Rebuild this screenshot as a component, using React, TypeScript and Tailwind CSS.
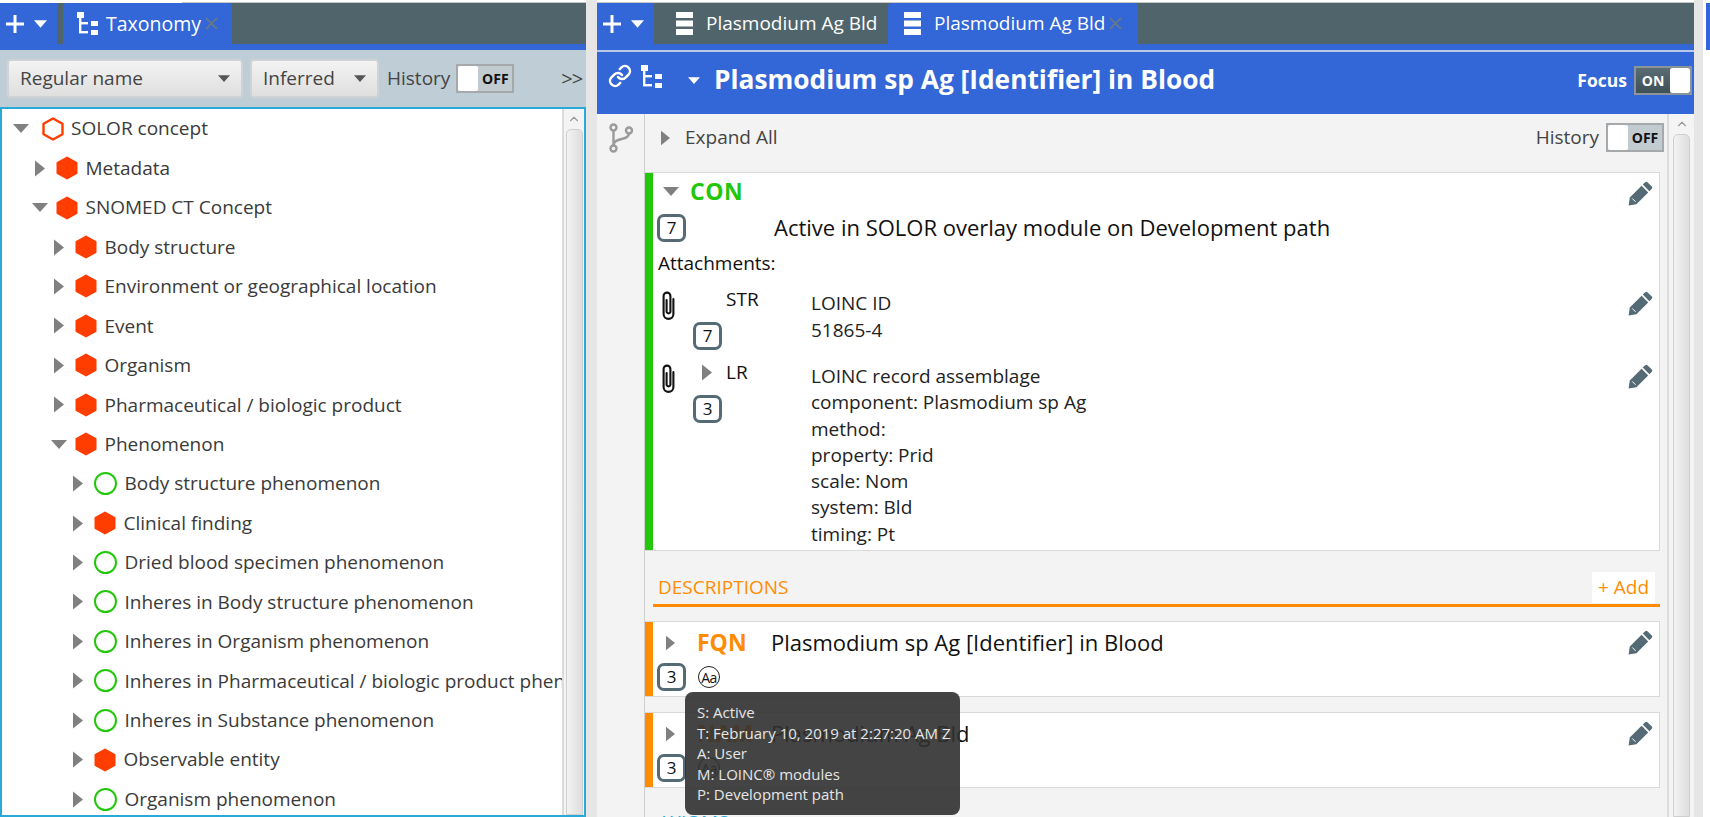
import React from "react";
import { Link as LinkIcon, ChevronUp } from "lucide-react";

const F = { fontFamily: '"Open Sans", "Noto Sans", sans-serif' };

function Down({ cls = "w-[16px] h-[9px]", color = "#808080" }: { cls?: string; color?: string }) {
  return (
    <svg viewBox="0 0 16 9" className={cls}>
      <polygon points="0,0 16,0 8,9" fill={color} />
    </svg>
  );
}
function Right({ cls = "w-[10px] h-[17px]" }: { cls?: string }) {
  return (
    <svg viewBox="0 0 10 16" className={cls}>
      <polygon points="0,0 10,8 0,16" fill="#808080" />
    </svg>
  );
}
function Hex({ hollow }: { hollow?: boolean }) {
  return (
    <svg viewBox="0 0 22 24" className="w-[22px] h-[24px] shrink-0">
      <polygon
        points="11,1.5 20.5,6.8 20.5,17.2 11,22.5 1.5,17.2 1.5,6.8"
        fill={hollow ? "none" : "#ff3d00"}
        stroke="#ff3d00"
        strokeWidth={hollow ? 2.4 : 2}
        strokeLinejoin="round"
      />
    </svg>
  );
}
function Circle() {
  return <span className="w-[23px] h-[23px] shrink-0 rounded-full border-[2.5px] border-[#22c70a]" />;
}
function TreeIcon({ cls }: { cls: string }) {
  return (
    <svg viewBox="0 0 21 23" className={cls} fill="#ffffff">
      <rect x="0" y="0" width="7" height="6" />
      <rect x="2" y="6" width="2.4" height="15" />
      <rect x="2" y="10" width="9" height="2.4" />
      <rect x="2" y="19" width="9" height="2.4" />
      <rect x="14" y="9" width="7" height="5" />
      <rect x="14" y="18" width="7" height="5" />
    </svg>
  );
}
function BarsIcon() {
  return (
    <svg viewBox="0 0 17 23" className="w-[17px] h-[23px] shrink-0" fill="#ffffff">
      <rect x="0" y="0" width="17" height="6" />
      <rect x="0" y="8.5" width="17" height="6" />
      <rect x="0" y="17" width="17" height="6" />
    </svg>
  );
}
function Clip() {
  return (
    <svg viewBox="0 0 13 29" className="w-[13px] h-[29px] shrink-0" fill="none" stroke="#111111" strokeWidth="2.1" strokeLinecap="round">
      <path d="M4.6 9 V21 a2 2 0 0 0 3.8 0 V5 a3.4 3.4 0 0 0 -6.8 0 V23 a4.9 4.9 0 0 0 9.8 0 V8" />
    </svg>
  );
}
function Pencil() {
  return (
    <svg viewBox="0 0 25 25" className="w-[25px] h-[25px] shrink-0" fill="#546a75">
      <path d="M17.2 1.2a1.6 1.6 0 0 1 2.2 0l4.4 4.4a1.6 1.6 0 0 1 0 2.2l-2.4 2.4-6.6-6.6z" />
      <path d="M13.6 4.8l6.6 6.6L8.4 23.2 0.6 24.4 1.8 16.6z" />
      <path d="M4.2 17.4l3.4 3.4" stroke="#ffffff" strokeWidth="1" fill="none" />
    </svg>
  );
}
function BranchIcon() {
  return (
    <svg viewBox="0 0 24 30" className="w-[24px] h-[30px]" fill="none" stroke="#9a9a9a" strokeWidth="2.4">
      <circle cx="4.5" cy="4.5" r="3" />
      <circle cx="4.5" cy="25.5" r="3" />
      <circle cx="20" cy="7.5" r="3" />
      <path d="M4.5 7.5 V22.5 M20 10.5 C20 18 4.5 14 4.5 22.5" />
    </svg>
  );
}
function XMark() {
  return (
    <svg viewBox="0 0 13 13" className="w-[13px] h-[13px] ml-[4px] shrink-0" stroke="#6c7b82" strokeWidth="1.6">
      <path d="M1 1 L12 12 M12 1 L1 12" />
    </svg>
  );
}
function Badge({ n }: { n: string }) {
  return (
    <span className="w-[29px] h-[28px] shrink-0 flex items-center justify-center rounded-[7px] border-[3px] border-[#546a75] bg-white text-[17px] text-[#111]">
      {n}
    </span>
  );
}
function Toggle({ on }: { on?: boolean }) {
  if (on)
    return (
      <div className="w-[58px] h-[29px] flex border-2 border-[#8a9499] bg-gradient-to-b from-[#5a6c74] to-[#3f4f56]">
        <span className="flex-1 flex items-center justify-center text-white text-[14px] font-bold">ON</span>
        <span className="w-[20px] bg-white rounded-[2px]" />
      </div>
    );
  return (
    <div className="w-[58px] h-[29px] flex border-2 border-[#a5a9ab] bg-[#c2cbd0]">
      <span className="w-[20px] bg-white rounded-[2px]" />
      <span className="flex-1 flex items-center justify-center text-[#111] text-[14px] font-bold">OFF</span>
    </div>
  );
}
function Scrollbar({ w }: { w: string }) {
  return (
    <div className={`${w} shrink-0 self-stretch border-l-2 border-[#dcdcdc] bg-[#f4f4f4] flex flex-col items-center`}>
      <ChevronUp className="w-[16px] h-[14px] mt-[3px] text-[#9a9a9a]" />
      <div className="w-[17px] flex-1 mt-[3px] rounded-t-[5px] border border-[#cfcfcf] bg-gradient-to-r from-[#f2f2f2] to-[#dedede]" />
    </div>
  );
}

type Row = { l: number; t: string; open?: boolean; k: "hex" | "hollow" | "circle" };
const rows: Row[] = [
  { l: 0, t: "SOLOR concept", open: true, k: "hollow" },
  { l: 1, t: "Metadata", k: "hex" },
  { l: 1, t: "SNOMED CT Concept", open: true, k: "hex" },
  { l: 2, t: "Body structure", k: "hex" },
  { l: 2, t: "Environment or geographical location", k: "hex" },
  { l: 2, t: "Event", k: "hex" },
  { l: 2, t: "Organism", k: "hex" },
  { l: 2, t: "Pharmaceutical / biologic product", k: "hex" },
  { l: 2, t: "Phenomenon", open: true, k: "hex" },
  { l: 3, t: "Body structure phenomenon", k: "circle" },
  { l: 3, t: "Clinical finding", k: "hex" },
  { l: 3, t: "Dried blood specimen phenomenon", k: "circle" },
  { l: 3, t: "Inheres in Body structure phenomenon", k: "circle" },
  { l: 3, t: "Inheres in Organism phenomenon", k: "circle" },
  { l: 3, t: "Inheres in Pharmaceutical / biologic product phenomenon", k: "circle" },
  { l: 3, t: "Inheres in Substance phenomenon", k: "circle" },
  { l: 3, t: "Observable entity", k: "hex" },
  { l: 3, t: "Organism phenomenon", k: "circle" },
];

function TreeRow({ r }: { r: Row }) {
  const left = [11, 29.5, 48.5, 67.5][r.l];
  return (
    <div className="h-[39.44px] flex items-center whitespace-nowrap overflow-hidden" style={{ paddingLeft: left }}>
      <span className="w-[16px] shrink-0 flex justify-center">{r.open ? <Down /> : <Right />}</span>
      <span className={r.l === 0 ? "ml-[13px] flex" : "ml-[8px] flex"}>
        {r.k === "circle" ? <Circle /> : <Hex hollow={r.k === "hollow"} />}
      </span>
      <span className={r.l === 0 ? "ml-[7px] text-[19px] text-[#3a3a3a]" : "ml-[8px] text-[19px] text-[#3a3a3a]"}>{r.t}</span>
    </div>
  );
}

function TabBar({ children }: { children: React.ReactNode }) {
  return (
    <div className="h-[47px] bg-[#3366d6] shrink-0">
      <div className="h-[41px] bg-[#4f646b] flex text-white">{children}</div>
    </div>
  );
}
function PlusMenu({ w }: { w: string }) {
  return (
    <div className={`${w} h-[47px] bg-[#3366d6] flex items-center pl-[6px] shrink-0 pb-[6px]`}>
      <svg viewBox="0 0 18 18" className="w-[18px] h-[18px]"><path d="M7.5 0h3v7.5H18v3h-7.5V18h-3v-7.5H0v-3h7.5z" fill="#fff" /></svg>
      <Down cls="w-[13px] h-[8px] ml-[10px]" color="#ffffff" />
    </div>
  );
}

function Select({ w, t }: { w: string; t: string }) {
  return (
    <div className={`${w} h-[39px] shrink-0 rounded-[4px] border-2 border-[#cfd3d6] bg-gradient-to-b from-[#f3f3f3] to-[#dfdfdf] flex items-center justify-between pl-[11px] pr-[11px] text-[19px] text-[#444]`}>
      <span>{t}</span>
      <Down cls="w-[12px] h-[7px]" color="#555555" />
    </div>
  );
}

function Card({ bar, children, h }: { bar: string; children: React.ReactNode; h: string }) {
  return (
    <div className={`${h} flex bg-white border border-[#d9d9d9] border-l-0 shrink-0`}>
      <div className={`${bar} w-[8px] shrink-0`} />
      <div className="flex-1 min-w-0">{children}</div>
    </div>
  );
}

function DescCard({ tag, text, tagCls }: { tag: string; text: string; tagCls: string }) {
  return (
    <Card bar="bg-[#ff8c00]" h="h-[76px]">
      <div className="flex items-center h-[41px] pl-[13px] pr-[6px]">
        <Right cls="w-[9px] h-[16px]" />
        <span className={`ml-[22px] w-[74px] text-[23px] font-bold ${tagCls}`}>{tag}</span>
        <span className="text-[22px] text-[#111] flex-1">{text}</span>
        <Pencil />
      </div>
      <div className="flex items-center pl-[4px]">
        <Badge n="3" />
        <span className="ml-[12px] w-[22px] h-[22px] rounded-full border border-[#222] flex items-center justify-center text-[14px] tracking-[-0.5px] text-[#111]">Aa</span>
      </div>
    </Card>
  );
}

export default function App() {
  return (
    <div className="w-[1710px] h-[817px] overflow-hidden flex bg-[#e6e6e6]" style={F}>
      {/* left pane */}
      <div className="w-[586px] shrink-0 flex flex-col bg-white">
        <div className="h-[3px] shrink-0 flex">
          <div className="w-[182px] bg-white" />
          <div className="flex-1 bg-white border-b border-[#c8c8c8]" />
        </div>
        <TabBar>
          <PlusMenu w="w-[57px]" />
          <div className="w-[6px]" />
          <div className="w-[169px] h-[47px] bg-[#3366d6] rounded-t-[4px] flex items-center pl-[14px] pb-[6px]">
            <TreeIcon cls="w-[21px] h-[23px]" />
            <span className="ml-[8px] text-[19.5px]">Taxonomy</span>
            <XMark />
          </div>
        </TabBar>
        <div className="h-[57px] bg-[#bfcdd6] flex items-center pl-[7px] shrink-0">
          <Select w="w-[236px]" t="Regular name" />
          <div className="w-[7px]" />
          <Select w="w-[129px]" t="Inferred" />
          <span className="ml-[8px] text-[19px] text-[#444]">History</span>
          <span className="ml-[6px]"><Toggle /></span>
          <span className="ml-[47px] text-[20px] text-[#444] leading-none tracking-[-1px]">&gt;&gt;</span>
        </div>
        <div className="flex-1 min-h-0 flex border-2 border-[#29a9d8] bg-white">
          <div className="flex-1 min-w-0 overflow-hidden">
            {rows.map((r) => (
              <TreeRow key={r.t} r={r} />
            ))}
          </div>
          <Scrollbar w="w-[22px]" />
        </div>
      </div>

      <div className="w-[11px] shrink-0" />

      {/* right pane */}
      <div className="w-[1097px] shrink-0 flex flex-col">
        <div className="h-[3px] shrink-0 bg-white border-b border-[#c8c8c8]" />
        <TabBar>
          <PlusMenu w="w-[57px]" />
          <div className="w-[234px] flex items-center pl-[22px]">
            <BarsIcon />
            <span className="ml-[13px] text-[19px]">Plasmodium Ag Bld</span>
          </div>
          <div className="w-[250px] h-[47px] bg-[#3366d6] rounded-t-[4px] flex items-center pl-[16px] pb-[6px]">
            <BarsIcon />
            <span className="ml-[13px] text-[19px]">Plasmodium Ag Bld</span>
            <XMark />
          </div>
        </TabBar>
        <div className="h-[2px] bg-[#b9c8e8] shrink-0" />
        <div className="h-[62px] bg-[#3366d6] flex items-center text-white pl-[11px] pr-[2px] pb-[6px] shrink-0">
          <div className="flex items-center mb-[8px]">
            <LinkIcon className="w-[24px] h-[24px]" strokeWidth={2.5} />
            <TreeIcon cls="w-[21px] h-[23px] ml-[9px]" />
          </div>
          <Down cls="w-[12px] h-[7px] ml-[26px]" color="#ffffff" />
          <span className="ml-[14px] text-[26.3px] font-bold flex-1">Plasmodium sp Ag [Identifier] in Blood</span>
          <span className="text-[17.5px] font-bold mr-[7px]">Focus</span>
          <Toggle on />
        </div>
        <div className="flex-1 min-h-0 flex relative">
          <div className="w-[48px] shrink-0 bg-[#f3f3f3] border-r border-[#cfcfcf] pt-[9px] pl-[12px]">
            <BranchIcon />
          </div>
          <div className="flex-1 min-w-0 bg-[#f3f3f3] overflow-hidden flex flex-col">
            <div className="h-[58px] shrink-0 flex items-start pt-[9px] pl-[16px] pr-[3px]">
              <span className="flex items-center h-[29px]"><Right cls="w-[9px] h-[16px]" /></span>
              <span className="ml-[15px] h-[29px] flex items-center text-[19px] text-[#444] flex-1">Expand All</span>
              <span className="h-[29px] flex items-center text-[19px] text-[#444] mr-[7px]">History</span>
              <Toggle />
            </div>
            <div className="pr-[7px] flex flex-col">
              <Card bar="bg-[#22c70a]" h="h-[379px]">
                <div className="h-[41px] flex items-center pl-[10px] pr-[6px]">
                  <div className="flex-1 flex items-center pb-[4px]">
                    <Down />
                    <span className="ml-[11px] text-[23px] font-bold text-[#22c70a] tracking-[0.5px]">CON</span>
                  </div>
                  <Pencil />
                </div>
                <div className="flex items-center pl-[4px] h-[28px]">
                  <Badge n="7" />
                  <span className="ml-[88px] pb-[2px] text-[22px] text-[#111]">Active in SOLOR overlay module on Development path</span>
                </div>
                <div className="h-[42px] flex items-center pl-[5px] text-[19px] text-[#111]">Attachments:</div>
                <div className="flex pl-[9px] pr-[6px] mt-[7px] h-[73px]">
                  <Clip />
                  <div className="w-[118px] ml-[18px] flex flex-col">
                    <span className="ml-[33px] h-[16px] flex items-center text-[19px] text-[#111]">STR</span>
                    <span className="mt-[15px]"><Badge n="7" /></span>
                  </div>
                  <div className="flex-1 -mt-[1px] text-[19px] leading-[26.5px] text-[#222]">
                    <div>LOINC ID</div>
                    <div>51865-4</div>
                  </div>
                  <Pencil />
                </div>
                <div className="flex pl-[9px] pr-[6px]">
                  <Clip />
                  <div className="w-[118px] ml-[18px] flex flex-col">
                    <span className="h-[16px] flex items-center text-[19px] text-[#111]">
                      <span className="ml-[9px] w-[24px]"><Right cls="w-[10px] h-[17px]" /></span>LR
                    </span>
                    <span className="mt-[15px]"><Badge n="3" /></span>
                  </div>
                  <div className="flex-1 -mt-[1px] text-[19px] leading-[26.3px] text-[#222]">
                    <div>LOINC record assemblage</div>
                    <div>component: Plasmodium sp Ag</div>
                    <div>method:</div>
                    <div>property: Prid</div>
                    <div>scale: Nom</div>
                    <div>system: Bld</div>
                    <div>timing: Pt</div>
                  </div>
                  <Pencil />
                </div>
              </Card>
              <div className="ml-[8px] mt-[20px] h-[36px] border-b-[3px] border-[#ff8c00] flex items-center justify-between shrink-0">
                <span className="ml-[5px] text-[19px] text-[#ff8c00]">DESCRIPTIONS</span>
                <span className="mr-[5px] px-[6px] py-[1px] bg-white text-[19px] text-[#ff8c00]">+ Add</span>
              </div>
              <div className="h-[14px] shrink-0" />
              <DescCard tag="FQN" text="Plasmodium sp Ag [Identifier] in Blood" tagCls="text-[#ff8c00]" />
              <div className="h-[15px] shrink-0" />
              <DescCard tag="NAM" text="Plasmodium Ag Bld" tagCls="text-[#ff8c00]" />
              <div className="ml-[13px] mt-[20px] text-[19px] text-[#29a9d8]">AXIOMS</div>
            </div>
          </div>
          <Scrollbar w="w-[27px]" />
          <div className="absolute left-[88px] top-[578px] w-[275px] h-[123px] rounded-[8px] bg-[#303030]/90 pl-[12px] py-[10px] text-[15px] leading-[20.5px] text-[#e6e6e6] whitespace-nowrap">
            <div>S: Active</div>
            <div>T: February 10, 2019 at 2:27:20 AM Z</div>
            <div>A: User</div>
            <div>M: LOINC® modules</div>
            <div>P: Development path</div>
          </div>
        </div>
      </div>

      <div className="w-[9px] shrink-0" />
      <div className="w-[7px] shrink-0 bg-white">
        <div className="h-[47px] mt-[3px] bg-[#3366d6] ml-[3px]" />
      </div>
    </div>
  );
}
